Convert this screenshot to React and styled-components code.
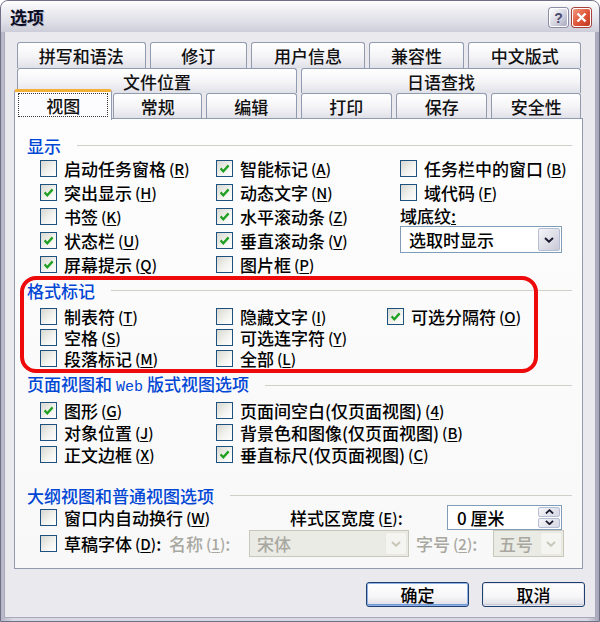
import React from 'react';
import styled, { createGlobalStyle } from 'styled-components';

const GlobalStyle = createGlobalStyle`
  html, body { margin: 0; padding: 0; background: #ffffff; }
  body {
    font-family: "Noto Sans CJK SC", "Noto Sans", sans-serif;
    font-size: 17px;
    font-weight: 500;
    color: #000;
  }
`;

const Window = styled.div`
  width: 600px;
  height: 622px;
  box-sizing: border-box;
  display: flex;
  flex-direction: column;
  border: 1px solid #6f6f86;
  border-radius: 8px 8px 0 0;
  background: linear-gradient(90deg, #b4b4c6, #d8d8e2 2%, #d8d8e2 98%, #a4a4b8);
  overflow: hidden;
`;

const TitleBar = styled.div`
  height: 31px;
  flex: none;
  display: flex;
  align-items: center;
  justify-content: space-between;
  padding: 0 8px 0 9px;
  background: linear-gradient(#ffffff, #eeeef3 30%, #dedee7 70%, #cdcdda);
`;

const Title = styled.div`
  font-size: 17px;
  font-weight: 700;
  color: #0c0c24;
  text-shadow: 1px 1px 0 #c0c0d2;
  line-height: 1;
`;

const Caps = styled.div`
  display: flex;
  gap: 4px;
  margin-top: 2px;
`;

const CapButton = styled.div`
  width: 19px;
  height: 19px;
  box-sizing: border-box;
  border-radius: 3px;
  border: 1px solid #ffffff;
  box-shadow: 0 0 0 1px ${p => (p.$close ? '#a8403a' : '#8c8ca4')};
  background: ${p =>
    p.$close
      ? 'linear-gradient(135deg, #f39a80, #e0583c 50%, #c0381f)'
      : 'linear-gradient(135deg, #ffffff, #d4d4e2 55%, #a8a8bf)'};
  display: flex;
  align-items: center;
  justify-content: center;
  font: 700 14px "Liberation Sans", sans-serif;
  color: #4a4a6c;
`;

const Client = styled.div`
  flex: 1;
  display: flex;
  flex-direction: column;
  margin: 0 3px 4px 3px;
  padding: 10px 12px 10px 9px;
  background: #e9e9ee;
  border: 1px solid #a8a8ba;
  border-top: none;
  box-sizing: border-box;
`;

const TabStrip = styled.div`
  height: 76px;
  flex: none;
  display: flex;
  flex-direction: column;
  margin: 0 2px 0 3px;
`;

const TabRow = styled.div`
  display: grid;
  grid-template-columns: ${p => p.$cols};
  column-gap: 4px;
  height: ${p => p.$h}px;
`;

const Tab = styled.div`
  box-sizing: border-box;
  display: flex;
  align-items: center;
  justify-content: center;
  border: 1px solid #919bb0;
  border-bottom: none;
  border-radius: 3px 3px 0 0;
  background: linear-gradient(#ffffff, #f4f4f7 55%, #e0e0e8);
  font-size: 17px;
  line-height: 1;
  color: #111;
  ${p =>
    p.$active &&
    `
    position: relative;
    z-index: 2;
    margin: -4px -3px -2px -3px;
    border-top: 3px solid #f5b038;
    background: #fcfcfe;
    padding: 1px 3px 3px;
  `}
`;

const Focus = styled.span`
  flex: 1;
  align-self: stretch;
  display: flex;
  align-items: center;
  justify-content: center;
  border: 1px dotted #333;
`;

const Panel = styled.div`
  height: 451px;
  flex: none;
  box-sizing: border-box;
  border: 1px solid #919bb0;
  background: linear-gradient(#fdfdfe, #f8f8f8);
  padding: 16px 10px 0 12px;
  display: flex;
  flex-direction: column;
`;

const Group = styled.section`
  margin-top: ${p => p.$top || 0}px;
  ${p =>
    p.$mark &&
    `
    position: relative;
    &::after {
      content: '';
      position: absolute;
      left: -7px;
      top: -4px;
      right: 34px;
      bottom: -4px;
      border: 4px solid #ee0a0a;
      border-radius: 16px;
      pointer-events: none;
    }
  `}
`;

const Legend = styled.div`
  height: 20px;
  display: flex;
  align-items: center;
`;

const LegendText = styled.span`
  color: #0046d5;
  font-size: 17px;
  line-height: 1;
  white-space: pre;
`;

const Mono = styled.span`
  font-family: "Liberation Mono", "DejaVu Sans Mono", monospace;
  font-size: 15px;
  margin: 0 4px;
`;

const Rule = styled.span`
  flex: 1;
  height: 1px;
  background: #d0d0c8;
  margin-left: 16px;
`;

const Body = styled.div`
  display: flex;
  margin: ${p => p.$gap}px 0 0 13px;
`;

const Col = styled.div`
  display: flex;
  flex-direction: column;
  width: ${p => (p.$w ? `${p.$w}px` : 'auto')};
  flex: ${p => (p.$w ? 'none' : '1')};
`;

const Line = styled.div`
  height: ${p => p.$h}px;
  display: flex;
  align-items: center;
  white-space: nowrap;
  font-size: 17px;
  line-height: 1;
  color: ${p => (p.$dim ? '#a8a8a0' : '#000')};
`;

const Box = styled.span`
  width: 17px;
  height: 17px;
  box-sizing: border-box;
  flex: none;
  border: 1px solid #1c5180;
  background: linear-gradient(135deg, #d8d8d2, #f4f4f0 60%, #ffffff);
  display: inline-flex;
  align-items: center;
  justify-content: center;
  margin-right: 7px;
`;

const Key = styled.span`
  margin-left: 3px;
  font-size: 15px;
  & u { text-underline-offset: 2px; }
`;

const Select = styled.div`
  width: ${p => p.$w}px;
  height: ${p => p.$h || 27}px;
  box-sizing: border-box;
  border: 1px solid ${p => (p.$off ? '#c9c7ba' : '#7f9db9')};
  background: ${p => (p.$off ? '#ebebe6' : '#ffffff')};
  color: ${p => (p.$off ? '#a8a8a0' : '#000')};
  display: flex;
  align-items: center;
  padding: 1px;
  font-size: 17px;
  line-height: 1;
`;

const Value = styled.span`
  flex: 1;
  padding-left: ${p => p.$pad || 8}px;
  white-space: pre;
`;

const Arrow = styled.span`
  width: 22px;
  align-self: stretch;
  box-sizing: border-box;
  border: 1px solid ${p => (p.$off ? '#e8e8e0' : '#b6bed4')};
  border-radius: 2px;
  background: ${p =>
    p.$off ? '#f4f4f0' : 'linear-gradient(135deg, #f4f4f8, #dcdce6 60%, #c8c8d6)'};
  display: flex;
  align-items: center;
  justify-content: center;
`;

const Spin = styled.span`
  width: 22px;
  align-self: stretch;
  display: flex;
  flex-direction: column;
  gap: 1px;
`;

const SpinHalf = styled.span`
  flex: 1;
  box-sizing: border-box;
  border: 1px solid #b6bed4;
  border-radius: 2px;
  background: linear-gradient(135deg, #f4f4f8, #d8d8e4);
  display: flex;
  align-items: center;
  justify-content: center;
`;

const Grid = styled.div`
  display: grid;
  grid-template-columns: ${p => p.$cols};
  height: ${p => p.$h}px;
  align-items: center;
  margin-left: 13px;
  margin-top: ${p => p.$top || 0}px;
`;

const Label = styled.span`
  display: flex;
  align-items: center;
  white-space: nowrap;
  font-size: 17px;
  line-height: 1;
  padding-left: ${p => p.$pad || 0}px;
  color: ${p => (p.$dim ? '#a8a8a0' : '#000')};
`;

const Footer = styled.div`
  margin-top: 13px;
  display: flex;
  justify-content: flex-end;
  gap: 13px;
  margin-right: -2px;
`;

const Button = styled.button`
  width: 103px;
  height: 25px;
  box-sizing: border-box;
  border: 1px solid #1f3f6e;
  border-radius: 3px;
  background: linear-gradient(#ffffff, #f6f6f8 60%, #dcdce4);
  box-shadow: inset 0 0 0 1px ${p => (p.$primary ? '#8fb2e6' : '#e4e6f0')},
    inset 0 -2px 0 ${p => (p.$primary ? '#6f98d8' : '#c8cad6')};
  font-family: "Noto Sans CJK SC", sans-serif;
  font-size: 17px;
  font-weight: 500;
  line-height: 1;
  color: #000;
  padding: 0;
`;

const Check = () => (
  <svg width="11" height="11" viewBox="0 0 11 11">
    <path d="M1.6 5.4 L4.3 8.2 L9.6 2.4" fill="none" stroke="#21a121" strokeWidth="2.3" />
  </svg>
);

const Chevron = ({ up, color = '#1c1c30', w = 10 }) => (
  <svg width={w} height={w * 0.6} viewBox="0 0 10 6">
    <path
      d={up ? 'M1 5 L5 1.3 L9 5' : 'M1 1 L5 4.7 L9 1'}
      fill="none"
      stroke={color}
      strokeWidth="2"
    />
  </svg>
);

const Opt = ({ text, k, on, h }) => (
  <Line $h={h}>
    <Box>{on && <Check />}</Box>
    {text}
    <Key>
      (<u>{k}</u>)
    </Key>
  </Line>
);

const Header = ({ children }) => (
  <Legend>
    <LegendText>{children}</LegendText>
    <Rule />
  </Legend>
);

const row1 = ['拼写和语法', '修订', '用户信息', '兼容性', '中文版式'];
const row3 = ['常规', '编辑', '打印', '保存', '安全性'];

export default function App() {
  return (
    <>
      <GlobalStyle />
      <Window>
        <TitleBar>
          <Title>选项</Title>
          <Caps>
            <CapButton>?</CapButton>
            <CapButton $close>
              <svg width="11" height="11" viewBox="0 0 11 11">
                <path d="M1.5 1.5 L9.5 9.5 M9.5 1.5 L1.5 9.5" stroke="#ffffff" strokeWidth="2.4" />
              </svg>
            </CapButton>
          </Caps>
        </TitleBar>
        <Client>
          <TabStrip>
            <TabRow $cols="129fr 98fr 114fr 96fr 113fr" $h={26}>
              {row1.map(t => (
                <Tab key={t}>{t}</Tab>
              ))}
            </TabRow>
            <TabRow $cols="1fr 1fr" $h={25}>
              <Tab>文件位置</Tab>
              <Tab>日语查找</Tab>
            </TabRow>
            <TabRow $cols="93fr 89fr 91fr 92fr 92fr 90fr" $h={25}>
              <Tab $active>
                <Focus>视图</Focus>
              </Tab>
              {row3.map(t => (
                <Tab key={t}>{t}</Tab>
              ))}
            </TabRow>
          </TabStrip>

          <Panel>
            <Group>
              <Header>显示</Header>
              <Body $gap={1}>
                <Col $w={176}>
                  <Opt h={24} text="启动任务窗格" k="R" />
                  <Opt h={24} text="突出显示" k="H" on />
                  <Opt h={24} text="书签" k="K" />
                  <Opt h={24} text="状态栏" k="U" on />
                  <Opt h={24} text="屏幕提示" k="Q" on />
                </Col>
                <Col $w={184}>
                  <Opt h={24} text="智能标记" k="A" on />
                  <Opt h={24} text="动态文字" k="N" on />
                  <Opt h={24} text="水平滚动条" k="Z" on />
                  <Opt h={24} text="垂直滚动条" k="V" on />
                  <Opt h={24} text="图片框" k="P" />
                </Col>
                <Col>
                  <Opt h={24} text="任务栏中的窗口" k="B" />
                  <Opt h={24} text="域代码" k="F" />
                  <Line $h={22}>
                    域底纹<u>:</u>
                  </Line>
                  <Select $w={162}>
                    <Value $pad={7}>选取时显示</Value>
                    <Arrow>
                      <Chevron />
                    </Arrow>
                  </Select>
                </Col>
              </Body>
            </Group>

            <Group $top={4} $mark>
              <Header>格式标记</Header>
              <Body $gap={6}>
                <Col $w={176}>
                  <Opt h={21} text="制表符" k="T" />
                  <Opt h={21} text="空格" k="S" />
                  <Opt h={21} text="段落标记" k="M" />
                </Col>
                <Col $w={171}>
                  <Opt h={21} text="隐藏文字" k="I" />
                  <Opt h={21} text="可选连字符" k="Y" />
                  <Opt h={21} text="全部" k="L" />
                </Col>
                <Col>
                  <Opt h={21} text="可选分隔符" k="O" on />
                </Col>
              </Body>
            </Group>

            <Group $top={6}>
              <Header>
                页面视图和<Mono>Web</Mono>版式视图选项
              </Header>
              <Body $gap={4}>
                <Col $w={176}>
                  <Opt h={22} text="图形" k="G" on />
                  <Opt h={22} text="对象位置" k="J" />
                  <Opt h={22} text="正文边框" k="X" />
                </Col>
                <Col>
                  <Opt h={22} text="页面间空白(仅页面视图)" k="4" />
                  <Opt h={22} text="背景色和图像(仅页面视图)" k="B" />
                  <Opt h={22} text="垂直标尺(仅页面视图)" k="C" on />
                </Col>
              </Body>
            </Group>

            <Group $top={20}>
              <Header>大纲视图和普通视图选项</Header>
              <Grid $cols="250px 157px 115px" $h={26} $top={-1}>
                <Opt h={26} text="窗口内自动换行" k="W" />
                <Label>
                  样式区宽度
                  <Key>
                    (<u>E</u>)
                  </Key>
                  :
                </Label>
                <Select $w={115} $h={25}>
                  <Value $pad={8}>0 厘米</Value>
                  <Spin>
                    <SpinHalf>
                      <Chevron up w={9} />
                    </SpinHalf>
                    <SpinHalf>
                      <Chevron w={9} />
                    </SpinHalf>
                  </Spin>
                </Select>
              </Grid>
              <Grid $cols="129px 80px 160px 84px 71px" $h={26}>
                <Label>
                  <Box />
                  草稿字体
                  <Key>
                    (<u>D</u>)
                  </Key>
                  :
                </Label>
                <Label $dim>
                  名称<Key>(<u>1</u>)</Key>:
                </Label>
                <Select $w={160} $off>
                  <Value $pad={6}>宋体</Value>
                  <Arrow $off>
                    <Chevron color="#c9c7ba" />
                  </Arrow>
                </Select>
                <Label $dim $pad={7}>
                  字号<Key>(<u>2</u>)</Key>:
                </Label>
                <Select $w={71} $off>
                  <Value $pad={4}>五号</Value>
                  <Arrow $off>
                    <Chevron color="#c9c7ba" />
                  </Arrow>
                </Select>
              </Grid>
            </Group>
          </Panel>

          <Footer>
            <Button $primary>确定</Button>
            <Button>取消</Button>
          </Footer>
        </Client>
      </Window>
    </>
  );
}
